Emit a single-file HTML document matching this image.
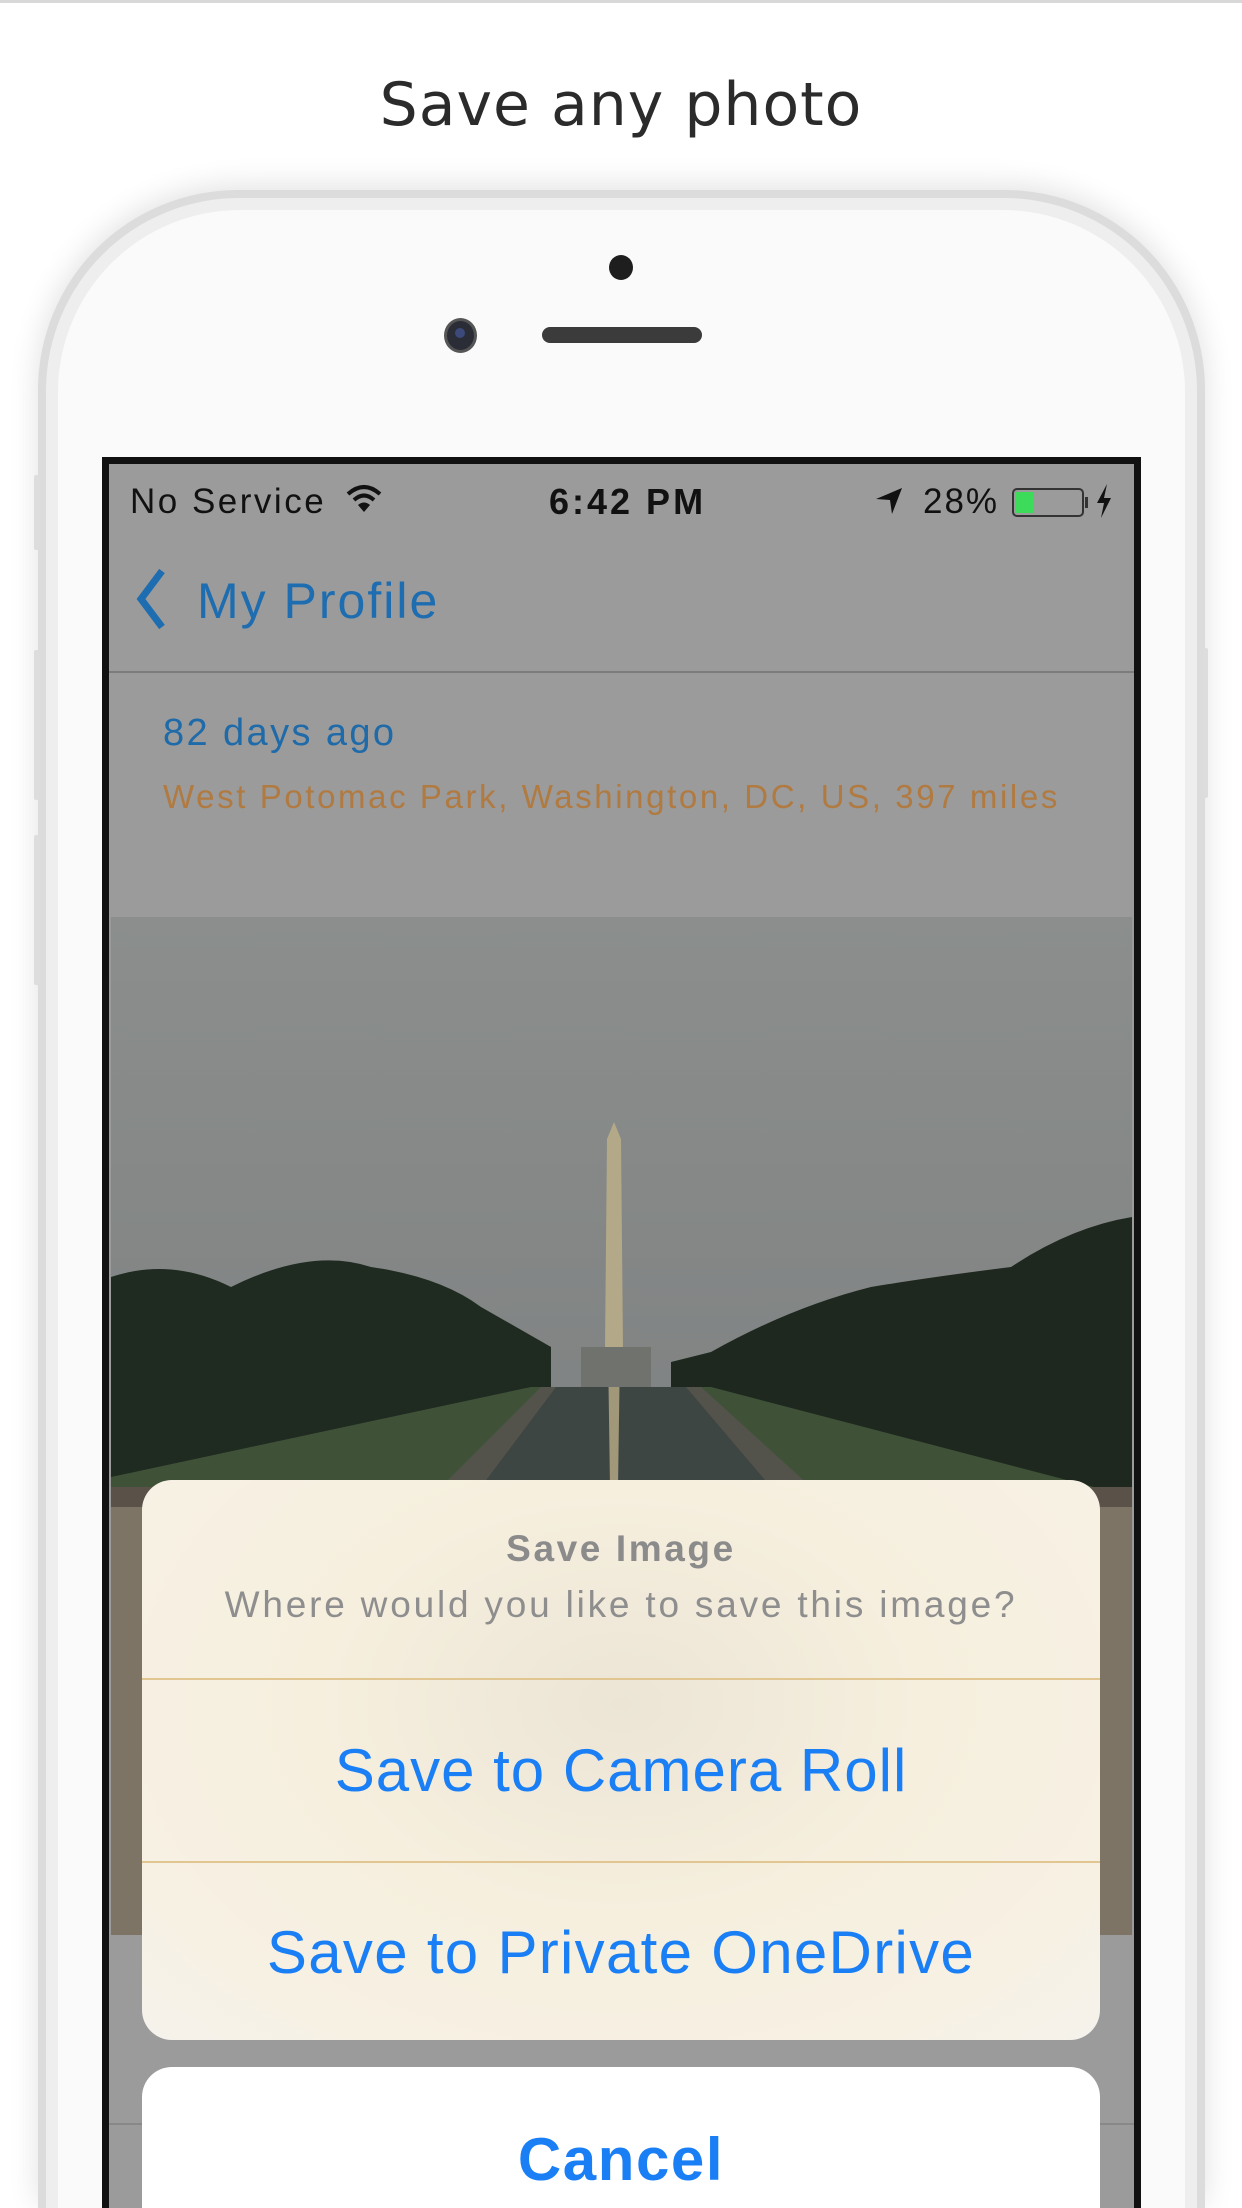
<!DOCTYPE html>
<html style="width:1242px;height:2208px;overflow:hidden"><head><meta charset="utf-8"><style>
*{margin:0;padding:0;box-sizing:border-box}
html,body{width:1242px;height:2208px;overflow:hidden}
body{background:#fff;position:relative;font-family:"Liberation Sans",sans-serif}
.abs{position:absolute}
</style></head><body>
<div class="abs" style="left:0;top:0;width:1242px;height:3px;background:#d8d8d8"></div>
<div class="abs" style="left:0;top:70px;width:1242px;text-align:center;font-family:'DejaVu Sans',sans-serif;font-size:60px;color:#2b2b2b;letter-spacing:1px">Save any photo</div>
<div class="abs" style="left:38px;top:190px;width:1167px;height:2018px;border-radius:200px 200px 0 0;background:#dcdcdc;box-shadow:0 -4px 30px rgba(0,0,0,0.12)"></div>
<div class="abs" style="left:46px;top:198px;width:1151px;height:2010px;border-radius:193px 193px 0 0;background:#eeeeee"></div>
<div class="abs" style="left:58px;top:210px;width:1127px;height:1998px;border-radius:182px 182px 0 0;background:#fafafa"></div>
<div class="abs" style="left:34px;top:475px;width:5px;height:75px;background:#ddd;border-radius:2px"></div>
<div class="abs" style="left:34px;top:650px;width:5px;height:150px;background:#ddd;border-radius:2px"></div>
<div class="abs" style="left:34px;top:835px;width:5px;height:150px;background:#ddd;border-radius:2px"></div>
<div class="abs" style="left:1203px;top:648px;width:5px;height:150px;background:#ddd;border-radius:2px"></div>
<div class="abs" style="left:609px;top:255px;width:24px;height:25px;border-radius:50%;background:#1e1e1e"></div>
<div class="abs" style="left:444px;top:318px;width:33px;height:35px;border-radius:50%;background:#2a2d36;border:3px solid #555"></div>
<div class="abs" style="left:455px;top:328px;width:10px;height:10px;border-radius:50%;background:#3b4a7a"></div>
<div class="abs" style="left:542px;top:327px;width:160px;height:16px;border-radius:8px;background:#3b3b3b"></div>
<div class="abs" style="left:102px;top:457px;width:1039px;height:1751px;background:#111"></div>
<div class="abs" style="left:109px;top:464px;width:1025px;height:1744px;background:#9b9b9b;overflow:hidden">
  <div class="abs" style="left:21px;top:18px;font-size:35px;color:#111;letter-spacing:2.5px">No Service</div>
  <svg class="abs" style="left:237px;top:20px" width="36" height="30" viewBox="0 0 36 30"><path d="M2 10 Q18 -4 34 10" stroke="#111" stroke-width="4" fill="none"/><path d="M8 16 Q18 7 28 16" stroke="#111" stroke-width="4" fill="none"/><path d="M12 21 L18 28 L24 21 Q18 16 12 21Z" fill="#111"/></svg>
  <div class="abs" style="left:440px;top:17px;font-size:36px;font-weight:bold;color:#111;letter-spacing:3px">6:42 PM</div>
  <svg class="abs" style="left:765px;top:22px" width="30" height="30" viewBox="0 0 30 30"><path d="M2 13 L28 2 L18 28 L16 14Z" fill="#111"/></svg>
  <div class="abs" style="left:814px;top:18px;font-size:35px;color:#111;letter-spacing:2px">28%</div>
  <div class="abs" style="left:903px;top:24px;width:72px;height:29px;border:2px solid #333;border-radius:5px"></div>
  <div class="abs" style="left:907px;top:28px;width:18px;height:21px;background:#3cdc5a"></div>
  <div class="abs" style="left:976px;top:33px;width:3px;height:11px;background:#333"></div>
  <svg class="abs" style="left:986px;top:20px" width="18" height="34" viewBox="0 0 18 34"><path d="M12 0 L2 19 L9 19 L6 34 L16 14 L9 14Z" fill="#111"/></svg>
  <svg class="abs" style="left:27px;top:103px" width="30" height="64" viewBox="0 0 30 64"><path d="M26 4 L5 32 L26 60" stroke="#1d6db0" stroke-width="7" fill="none"/></svg>
  <div class="abs" style="left:88px;top:108px;font-size:50px;color:#1d6db0;letter-spacing:2px">My Profile</div>
  <div class="abs" style="left:0;top:207px;width:1025px;height:2px;background:#7c7c7c"></div>
  <div class="abs" style="left:54px;top:248px;font-size:38px;color:#1f6aa8;letter-spacing:2.4px">82 days ago</div>
  <div class="abs" style="left:54px;top:314px;font-size:33px;color:#b07a40;letter-spacing:2.6px">West Potomac Park, Washington, DC, US, 397 miles</div>
  <svg class="abs" style="left:2px;top:453px" width="1021" height="1018" viewBox="0 0 1021 1018">
    <defs><linearGradient id="sky" x1="0" y1="0" x2="0" y2="1"><stop offset="0" stop-color="#8b8e8c"/><stop offset="0.5" stop-color="#808383"/><stop offset="1" stop-color="#6d7272"/></linearGradient></defs>
    <rect width="1021" height="1018" fill="url(#sky)"/>
    <path d="M0 360 Q60 340 120 370 Q200 330 260 350 Q330 360 370 390 L440 430 L440 1018 L0 1018Z" fill="#1f2a21"/>
    <path d="M1021 300 Q960 310 900 350 Q820 360 760 370 Q680 390 600 435 L560 445 L560 1018 L1021 1018Z" fill="#1e281f"/>
    <path d="M0 560 L420 470 L600 470 L1021 580 L1021 1018 L0 1018Z" fill="#3f5238"/>
    <path d="M430 470 L590 470 L700 570 L330 570Z" fill="#53534b"/>
    <path d="M445 470 L575 470 L660 570 L370 570Z" fill="#3e4644"/>
    <path d="M497 432 L509 432 L507 570 L499 570Z" fill="#a09878"/>
    <path d="M503 205 L510 222 L512 432 L494 432 L496 222Z" fill="#b3a888"/>
    <rect x="470" y="430" width="70" height="40" fill="#6f726d"/>
    <rect x="0" y="570" width="1021" height="448" fill="#7d7465"/>
    <rect x="0" y="570" width="1021" height="20" fill="#5a5249"/>
  </svg>
  <div class="abs" style="left:0;top:1659px;width:1025px;height:2px;background:#888"></div>
</div>
<div class="abs" style="left:142px;top:1480px;width:958px;height:560px;border-radius:30px;overflow:hidden;background:radial-gradient(ellipse at 50% 40%,#ece5d6 0%,#f6efde 45%,#f7f1e4 80%,#f5f2ec 100%)">
  <div class="abs" style="left:0;top:48px;width:958px;text-align:center;font-size:37px;font-weight:bold;color:#8b8b8b;letter-spacing:2.6px">Save Image</div>
  <div class="abs" style="left:0;top:104px;width:958px;text-align:center;font-size:37px;color:#8e8e8e;letter-spacing:2.8px">Where would you like to save this image?</div>
  <div class="abs" style="left:0;top:198px;width:958px;height:2px;background:#e2c692"></div>
  <div class="abs" style="left:0;top:256px;width:958px;text-align:center;font-size:60px;color:#1a7ff5;letter-spacing:1px">Save to Camera Roll</div>
  <div class="abs" style="left:0;top:381px;width:958px;height:2px;background:#e2c692"></div>
  <div class="abs" style="left:0;top:438px;width:958px;text-align:center;font-size:60px;color:#1a7ff5;letter-spacing:1.3px">Save to Private OneDrive</div>
</div>
<div class="abs" style="left:142px;top:2067px;width:958px;height:141px;border-radius:30px 30px 0 0;background:#fff">
  <div class="abs" style="left:0;top:58px;width:958px;text-align:center;font-size:60px;font-weight:bold;color:#1a7ff5;letter-spacing:1.6px">Cancel</div>
</div>
</body></html>
